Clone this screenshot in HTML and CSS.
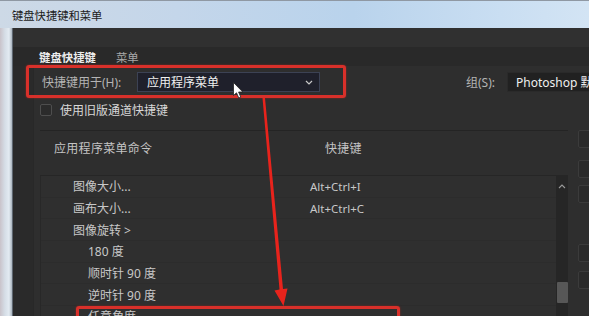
FILE: index.html
```html
<!DOCTYPE html>
<html lang="zh">
<head>
    <meta charset="UTF-8">
    <meta name="viewport" content="width=device-width, initial-scale=1.0">
    <title>键盘快捷键和菜单</title>
    <link rel="stylesheet" href="styles.css">
</head>
<body>
    <div class="window">
      <div class="titlebar">键盘快捷键和菜单</div>
      <div class="frame">
        <div class="frame-edge"></div>
        <div class="dialog">
          <div class="top-strip"></div>
          <div class="tabs">
            <span class="tab active">键盘快捷键</span>
            <span class="tab">菜单</span>
          </div>
          <div class="content">
            <div class="gutter"></div>
            <div class="panel">
              <div class="shortcut-row">
                <span class="label">快捷键用于(H):</span>
                <div class="select">
                  <span>应用程序菜单</span>
                  <svg class="chevron" width="8" height="5" viewBox="0 0 8 5"><path d="M1 1 L4 4 L7 1" fill="none" stroke="#c8c8c8" stroke-width="1.2"/></svg>
                </div>
                <span class="label group-label">组(S):</span>
                <div class="select set">Photoshop 默认值</div>
              </div>
              <label class="legacy">
                <span class="checkbox"></span>
                <span>使用旧版通道快捷键</span>
              </label>
              <div class="main">
                <div class="grid">
                  <div class="grid-head">
                    <span class="col-cmd">应用程序菜单命令</span>
                    <span class="col-key">快捷键</span>
                  </div>
                  <div class="grid-body">
                    <div class="list">
                      <div class="row"><span class="cmd">图像大小...</span><span class="key">Alt+Ctrl+I</span></div>
                      <div class="row"><span class="cmd">画布大小...</span><span class="key">Alt+Ctrl+C</span></div>
                      <div class="row"><span class="cmd">图像旋转 &gt;</span><span class="key"></span></div>
                      <div class="row sub"><span class="cmd">180 度</span><span class="key"></span></div>
                      <div class="row sub"><span class="cmd">顺时针 90 度</span><span class="key"></span></div>
                      <div class="row sub"><span class="cmd">逆时针 90 度</span><span class="key"></span></div>
                      <div class="row sub"><span class="cmd">任意角度...</span><span class="key"></span></div>
                    </div>
                    <div class="scrollbar">
                      <svg class="scroll-up" width="8" height="5" viewBox="0 0 8 5"><path d="M1 4 L4 1 L7 4" fill="none" stroke="#9a9a9a" stroke-width="1.1"/></svg>
                      <div class="thumb"></div>
                    </div>
                  </div>
                </div>
                <div class="buttons">
                  <div class="btn b1"></div>
                  <div class="btn b2"></div>
                  <div class="btn b3"></div>
                  <div class="btn b4"></div>
                  <div class="btn b5"></div>
                </div>
              </div>
            </div>
          </div>
        </div>
      </div>

      <div class="mark mark-select"></div>
      <div class="mark mark-row"></div>
      <svg class="arrow" width="589" height="316" viewBox="0 0 589 316">
        <polygon points="262.5,98 265,98 283,289 287.5,288.5 283.5,306 274.5,290.5 279.5,289.5" fill="#e8231c"/>
      </svg>
      <svg class="cursor" width="12" height="18" viewBox="0 0 12 18">
        <path d="M0.5 0.5 L0.5 13.5 L3.5 10.8 L5.8 16 L7.8 15.1 L5.6 10 L9.8 10 Z" fill="#ffffff" stroke="#222" stroke-width="0.8"/>
      </svg>
    </div>
</body>
</html>
```

FILE: styles.css
```css
body {
  margin: 0;
  font-family: "Noto Sans", "Noto Sans CJK SC", sans-serif;
  background: #2d2d2d;
}

.window {
  position: relative;
  width: 589px;
  height: 316px;
  overflow: hidden;
  display: flex;
  flex-direction: column;
}

.titlebar {
  height: 28px;
  flex: none;
  box-sizing: border-box;
  padding: 6px 0 0 12px;
  font-size: 11.3px;
  line-height: 18px;
  color: #1c1c1c;
  border-top: 1px solid #8f98a3;
  background: linear-gradient(90deg, #cdd9e6 0%, #c4d6ea 30%, #b9d3ec 60%, #c9def2 85%, #d3e4f4 100%);
}

.frame {
  flex: 1;
  display: flex;
}

.frame-edge {
  width: 12px;
  flex: none;
  background: linear-gradient(90deg, #c9c3ca 0%, #d5dde6 40%, #e3ebf2 75%, #a9b4bf 100%);
}

.dialog {
  flex: 1;
  display: flex;
  flex-direction: column;
  background: #2c2c2c;
  border-left: 1px solid #5d6670;
}

.top-strip {
  height: 19px;
  flex: none;
  background: #303030;
}

.tabs {
  height: 19px;
  flex: none;
  display: flex;
  align-items: center;
  gap: 20px;
  padding-left: 26px;
  background: #292929;
  font-size: 11.4px;
}

.tab {
  color: #a8a8a8;
}

.tab.active {
  color: #ececec;
  font-weight: bold;
}

.content {
  flex: 1;
  display: flex;
}

.gutter {
  width: 20px;
  flex: none;
  background: #2a2a2a;
  border-right: 1px solid #282828;
}

.panel {
  flex: 1;
  padding-left: 6px;
  background: #2e2e2e;
}

.shortcut-row {
  display: flex;
  align-items: center;
  height: 21px;
  margin-top: 5px;
  font-size: 12px;
}

.label {
  color: #b4b4b4;
  padding-left: 2px;
  width: 95px;
}

.select {
  box-sizing: border-box;
  height: 20px;
  width: 183px;
  display: flex;
  align-items: center;
  justify-content: space-between;
  padding: 0 6px 0 9px;
  background: #1f202b;
  border: 1px solid #3c4254;
  color: #f0f0f0;
}

.chevron {
  margin-top: 1px;
}

.group-label {
  width: auto;
  margin-left: 146px;
  padding-left: 0;
}

.select.set {
  width: 90px;
  margin-left: 12px;
  background: #212121;
  border-color: #2a2a2a;
  padding-left: 8px;
  white-space: nowrap;
  overflow: hidden;
  justify-content: flex-start;
}

.legacy {
  display: flex;
  align-items: center;
  gap: 8px;
  height: 14px;
  margin-top: 11px;
  font-size: 12px;
  color: #d8d8d8;
}

.checkbox {
  width: 10px;
  height: 10px;
  border: 1px solid #4e4e4e;
  border-radius: 2px;
  background: #2b2b2b;
}

.main {
  display: flex;
  margin-top: 13px;
}

.grid {
  width: 528px;
  flex: none;
}

.grid-head {
  height: 46px;
  box-sizing: border-box;
  border-top: 1px solid #242424;
  border-bottom: 1px solid #262626;
  display: flex;
  padding-top: 8px;
  font-size: 12px;
  color: #c4c4c4;
  letter-spacing: 0.3px;
}

.col-cmd {
  width: 271px;
  padding-left: 14px;
}

.grid-body {
  display: flex;
}

.list {
  flex: 1;
  background: #2f2f2f;
  border-left: 1px solid #282828;
}

.row {
  height: 21.7px;
  display: flex;
  align-items: center;
  font-size: 12px;
  color: #c8c8c8;
  border-bottom: 1px solid #2c2c2c;
  box-sizing: border-box;
}

.cmd {
  width: 237px;
  padding-left: 32px;
  white-space: nowrap;
}

.row.sub .cmd {
  padding-left: 47px;
  width: 222px;
}

.key {
  font-size: 11.5px;
}

.scrollbar {
  width: 12px;
  flex: none;
  background: #262626;
  display: flex;
  flex-direction: column;
  align-items: center;
}

.scroll-up {
  margin-top: 8px;
}

.thumb {
  width: 11px;
  height: 21px;
  margin-top: 93px;
  background: #575757;
  border-radius: 1px;
}

.buttons {
  margin-left: 10px;
  display: flex;
  flex-direction: column;
  width: 20px;
}

.btn {
  height: 16px;
  border: 1px solid #3b3b3b;
  border-radius: 2px;
  background: #2a2a2a;
}

.b2 { margin-top: 12px; }
.b3 { margin-top: 7px; }
.b4 { margin-top: 41px; }
.b5 { margin-top: 9px; }

.mark {
  position: absolute;
  border: 3px solid #d8302a;
  border-radius: 3px;
  box-shadow: 0 0 2px rgba(220, 40, 30, 0.6);
}

.mark-select {
  left: 26px;
  top: 65px;
  width: 314px;
  height: 27px;
}

.mark-row {
  left: 76px;
  top: 306px;
  width: 318px;
  height: 30px;
}

.arrow {
  position: absolute;
  left: 0;
  top: 0;
}

.cursor {
  position: absolute;
  left: 233px;
  top: 82px;
}
```
